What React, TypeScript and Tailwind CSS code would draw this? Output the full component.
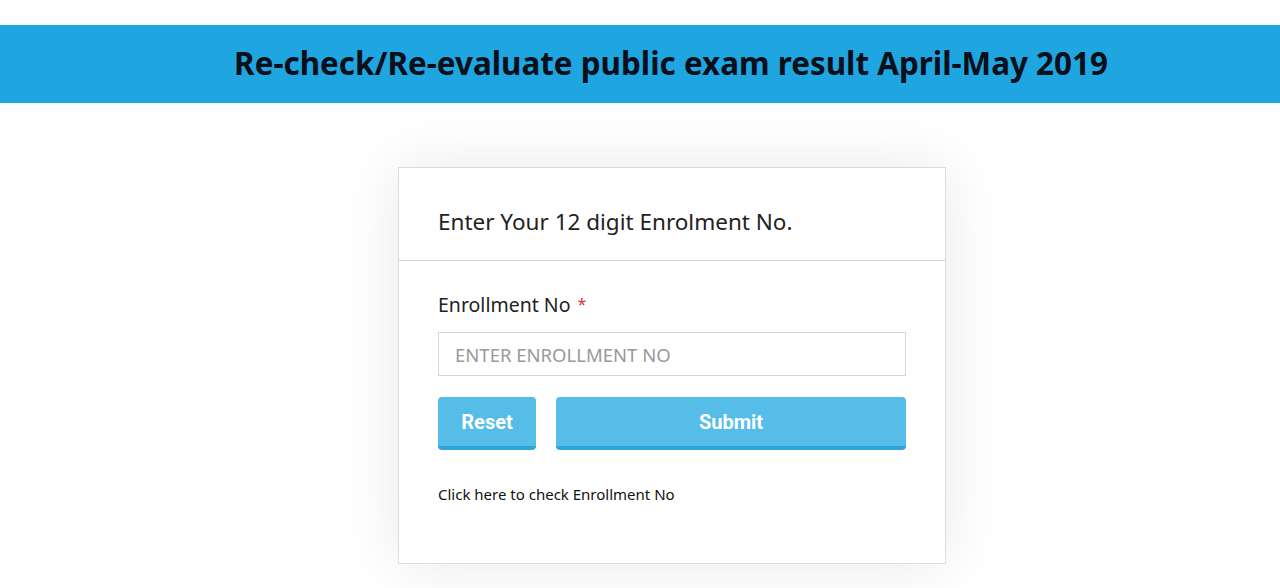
export default function App() {
  return (
    <div className="min-h-[588px] bg-white font-['Noto_Sans',sans-serif]">
      <div className="pt-[25px]">
        <div className="h-[78px] bg-[#1fa5e0] flex items-center justify-center pl-[62px] pb-[2px]">
          <h1 className="text-[31.4px] font-bold text-[#0b0f1a]">
            Re-check/Re-evaluate public exam result April-May 2019
          </h1>
        </div>
      </div>

      <div className="flex justify-center pt-[64px] pl-[64px]">
        <div className="w-[548px] h-[397px] bg-white border border-[#dcdcdc] shadow-[0_0_60px_rgba(0,0,0,0.09)]">
          <div className="h-[93px] border-b border-[#d6d6d6] px-[39px] pt-[39px]">
            <h2 className="text-[22.5px] leading-[30px] text-[#222]">
              Enter Your 12 digit Enrolment No.
            </h2>
          </div>
          <div className="px-[39px] pt-[32px]">
            <label className="block h-[24px] text-[19.5px] leading-[24px] text-[#222]">
              Enrollment No{" "}
              <span className="relative -top-[2px] ml-[2px] text-[16px] leading-[16px] text-[#d9312b]">*</span>
            </label>
            <input
              type="text"
              placeholder="ENTER ENROLLMENT NO"
              className="block mt-[15px] w-[468px] h-[44px] border border-[#d6d6d6] px-[16px] text-[18.5px] text-[#333] placeholder:text-[#999] outline-none"
            />
            <div className="flex gap-[20px] mt-[21px]">
              <button className="w-[98px] h-[53px] rounded-[4px] bg-[#56bce8] border-b-[4px] border-[#2ea5dc] text-white text-[20px] font-bold font-['Roboto',sans-serif]">
                Reset
              </button>
              <button className="w-[350px] h-[53px] rounded-[4px] bg-[#56bce8] border-b-[4px] border-[#2ea5dc] text-white text-[20px] font-bold font-['Roboto',sans-serif]">
                Submit
              </button>
            </div>
            <p className="mt-[33px] text-[15px] text-[#111]">
              Click here to check Enrollment No
            </p>
          </div>
        </div>
      </div>
    </div>
  );
}
